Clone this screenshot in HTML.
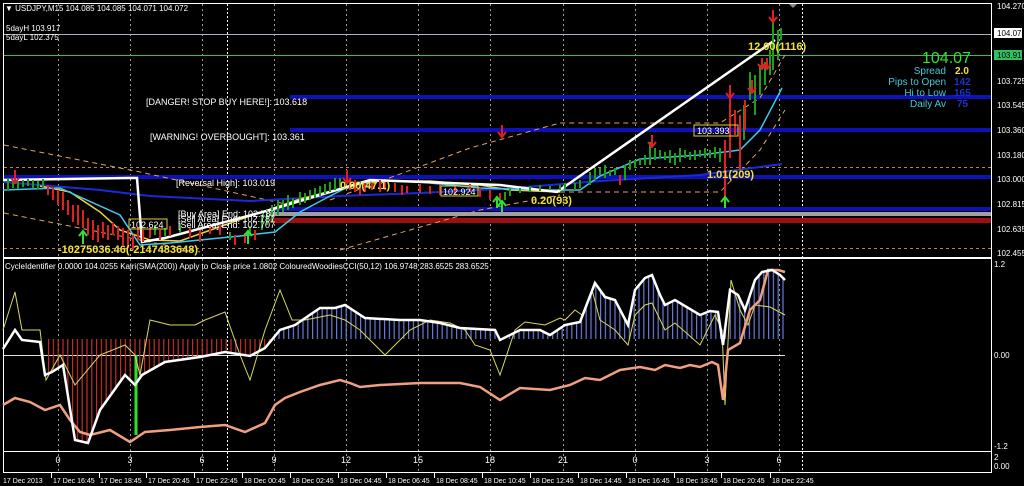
<!DOCTYPE html>
<html><head><meta charset="utf-8"><style>
html,body{margin:0;padding:0;background:#000;width:1024px;height:486px;overflow:hidden}
svg{display:block}
text{font-family:"Liberation Sans",sans-serif}
</style></head><body>
<svg width="1024" height="486" viewBox="0 0 1024 486" xmlns="http://www.w3.org/2000/svg">
<rect width="1024" height="486" fill="#000"/>
<defs>
<pattern id="stR" width="4.8" height="10" patternUnits="userSpaceOnUse"><rect x="0" y="0" width="1.2" height="10" fill="#c0302a"/></pattern>
<pattern id="stB" width="4.8" height="10" patternUnits="userSpaceOnUse"><rect x="0" y="0" width="1.2" height="10" fill="#6a78d8"/></pattern>
<clipPath id="cr"><rect x="45" y="258" width="225" height="200"/></clipPath>
<clipPath id="cb"><rect x="270" y="258" width="520" height="200"/></clipPath>
</defs>
<!-- frames -->
<rect x="3.5" y="3.5" width="988" height="254" fill="none" stroke="#fff"/>
<rect x="3.5" y="258.5" width="988" height="193" fill="none" stroke="#fff"/>
<rect x="3.5" y="451.5" width="988" height="21" fill="none" stroke="#fff"/>
<!-- vertical grid -->
<g stroke="#9a9a9a" stroke-dasharray="2,3" stroke-width="1">
<path d="M58.5 4V472M130.5 4V472M202.5 4V472M274.5 4V472M346.5 4V472M418.5 4V472M490.5 4V472M563.5 4V472M635.5 4V472M707.5 4V472M779.5 4V472"/>
</g>
<g stroke="#fff" stroke-dasharray="2,2"><path d="M227.5 4V472M802.5 4V472"/></g>
<!-- horizontal levels -->
<line x1="4" y1="34.5" x2="991" y2="34.5" stroke="#b0b0c0"/>
<line x1="4" y1="55.5" x2="991" y2="55.5" stroke="#3cc03c"/>
<g stroke="#1010b8" stroke-width="4">
<line x1="290" y1="97" x2="991" y2="97"/>
<line x1="290" y1="130" x2="991" y2="130"/>
<line x1="4" y1="177" x2="991" y2="177"/>
<line x1="270" y1="209" x2="991" y2="209"/>
</g>
<rect x="270" y="212" width="721" height="4" fill="#a0a0a0"/>
<rect x="270" y="218" width="721" height="5" fill="#9a1010"/>
<g stroke="#c08040" stroke-dasharray="3,3"><line x1="4" y1="167.5" x2="991" y2="167.5"/><line x1="4" y1="248.5" x2="991" y2="248.5"/></g>
<!-- orange channels -->
<g fill="none" stroke="#e0a060" stroke-dasharray="5,4" stroke-width="1">
<path d="M4 145L140 172L290 205"/>
<path d="M4 213L140 240L200 252"/>
<path d="M330 200L470 148L560 123L720 123L760 98L785 55"/>
<path d="M340 250L480 210L560 195"/>
<path d="M560 192L720 192L760 150L785 110"/>
</g>
<!-- MAs -->
<polyline fill="none" stroke="#1a2ad8" stroke-width="2" points="3,182 100,190 150,196 250,201 340,196 420,193 500,189 600,181 700,175 782,164"/>
<polyline fill="none" stroke="#f0d040" stroke-width="1.5" points="40,186 70,192 100,212 120,230 150,240 180,241 250,216 300,199 370,181 430,181 480,185 510,190 560,192"/>
<polyline fill="none" stroke="#40c8f0" stroke-width="1.5" points="3,190 60,188 120,215 140,245 170,243 240,236 275,232 300,212 330,196 350,186 380,181 420,182 480,188 540,190 580,190 600,176 640,159 700,155 740,150 760,130 782,88"/>
<polyline fill="none" stroke="#fff" stroke-width="2.5" points="3,180 130,178 137,178 142,242 165,238 270,210 310,198 370,180 500,185 557,192 775,40"/>
<!-- candles -->
<g fill="none" stroke-width="2">
<path stroke="#18a018" d="M8 178V190M13 180V188M18 181V189M23 180V187M28 179V186M33 180V188M38 181V189M43 179V187M155 225V235M165 228V236M180 224V233M230 232V240M250 226V236M262 215V230M267 210V225M272 205V222M278 200V215M283 200V212M288 195V210M293 198V208M300 192V205M305 193V203M310 190V200M315 188V198M320 186V196M325 184V194M330 182V192M335 178V190M340 178V188M505 192V200M510 188V196M520 188V193M530 186V192M540 185V191M550 186V190M560 185V190M565 183V189M575 183V190M580 180V188M590 172V185M595 168V180M600 168V175M605 165V178M610 170V176M615 168V175M625 165V180M630 160V170M635 160V168M640 158V165M645 155V165M650 142V165M655 148V160M660 150V158M665 152V160M670 150V163M675 153V165M680 148V162M685 150V158M690 152V160M695 150V160M700 150V157M705 148V158M710 150V158M715 147V158M720 148V162M744 105V140M750 72V100M755 75V115M760 65V95M765 62V85M770 50V75M773 18V70M778 30V60M781 28V40"/>
<path stroke="#e02020" d="M48 185V195M53 187V200M58 190V205M63 192V210M68 200V215M73 205V222M78 205V225M83 210V228M88 218V235M93 220V240M98 225V242M103 222V238M108 225V240M113 223V235M118 226V240M123 228V245M128 230V248M133 235V250M138 228V240M143 230V242M150 228V238M160 230V240M170 226V236M190 228V238M200 230V242M210 226V234M220 225V235M235 235V245M245 233V243M255 230V240M350 178V190M355 180V192M360 182V195M365 183V192M372 182V190M380 180V192M385 182V190M395 183V192M402 185V195M407 186V193M420 184V193M430 186V194M440 185V195M455 186V194M470 184V192M480 188V197M490 190V200M500 193V200M620 175V185M725 140V205M730 90V158M735 110V135M740 115V170M745 100V130"/>
</g>
<!-- arrows -->
<g fill="none" stroke-width="2">
<path stroke="#e02020" d="M15 170V182M11 178L15 183L19 178M347 170V182M343 178L347 183L351 178M502 125V136M498 132L502 137L506 132M652 135V146M648 142L652 147L656 142M730 85V97M726 93L730 98L734 93M752 80V92M748 88L752 93L756 88M762 58V68M758 64L762 69L766 64M767 58V68M763 64L767 69L771 64M773 10V21M769 17L773 22L777 17"/>
<path stroke="#30e030" d="M83 244V232M79 236L83 231L87 236M248 244V232M244 236L248 231L252 236M497 208V198M493 202L497 197L501 202M502 212V202M498 206L502 201L506 206M725 208V198M721 202L725 197L729 202"/>
</g>
<!-- box labels -->
<g font-size="9">
<rect x="129" y="219" width="38" height="10" fill="none" stroke="#e0d040"/><text x="131" y="228" fill="#fff">102.624</text>
<rect x="441" y="186" width="37" height="10" fill="none" stroke="#e0d040"/><text x="443" y="195" fill="#fff">102.924</text>
<rect x="694" y="125" width="44" height="11" fill="none" stroke="#e0d040"/><text x="697" y="134" fill="#fff">103.393</text>
</g>
<!-- text labels -->
<g font-size="9" fill="#fff">
<text x="146" y="105">[DANGER! STOP BUY HERE!]: 103.618</text>
<text x="150" y="140">[WARNING! OVERBOUGHT]: 103.361</text>
<text x="176" y="186">[Reversal High]: 103.019</text>
<text x="178" y="217">[Buy Area] End: 102.787</text>
<text x="178" y="222">[Sell Area] End: 102.787</text>
<text x="178" y="228">[Sell Area] End: 102.707</text>
</g>
<g font-size="11" font-weight="bold" fill="#f0e040">
<text x="58" y="253">-10275036.46(-2147483648)</text>
<text x="340" y="189">0.00(47.1)</text>
<text x="531" y="204">0.20(93)</text>
<text x="707" y="178">1.01(209)</text>
<text x="748" y="50">12.00(1116)</text>
</g>
<!-- header -->
<g font-size="8" fill="#fff">
<text x="5" y="11">▼ USDJPY,M15  104.085 104.085 104.071 104.072</text>
<text x="6" y="31">5dayH 103.917</text>
<text x="6" y="40">5dayL 102.375</text>
<text x="5" y="269">CycleIdentifier 0.0000 104.0255  Kairi(SMA(200)) Apply to Close price 1.0802  ColouredWoodiesCCI(50,12) 106.9748 283.6525 283.6525</text>
</g>
<!-- info panel -->
<text x="922" y="63" font-size="16" fill="#30e030">104.07</text>
<g font-size="10" text-anchor="end">
<text x="946" y="74" fill="#40c8d8">Spread</text><text x="946" y="85" fill="#40c8d8">Pips to Open</text><text x="946" y="96" fill="#40c8d8">Hi to Low</text><text x="946" y="107" fill="#40c8d8">Daily Av</text>
</g>
<g font-size="10" font-weight="bold"><text x="955" y="74" fill="#f0e040">2.0</text><text x="954" y="85" fill="#2030d0">142</text><text x="954" y="96" fill="#2030d0">165</text><text x="957" y="107" fill="#2030d0">75</text></g>
<!-- right axis -->
<g font-size="8" fill="#fff">
<text x="997" y="9">104.270</text>
<rect x="994" y="28" width="28" height="10" fill="#fff"/><text x="997" y="36" fill="#000">104.072</text>
<rect x="994" y="50" width="28" height="10" fill="#30c060"/><text x="997" y="58" fill="#000">103.917</text>
<text x="997" y="84">103.725</text><text x="997" y="108">103.545</text><text x="997" y="133">103.360</text>
<text x="997" y="158">103.180</text><text x="997" y="182">103.000</text><text x="997" y="207">102.815</text>
<text x="997" y="232">102.635</text><text x="997" y="256">102.455</text>
<text x="994" y="267">1.2</text><text x="994" y="358">0.00</text><text x="994" y="449">-1.2</text>
<text x="994" y="460">2</text><text x="994" y="469">0.00</text>
</g>
<!-- subwindow -->
<line x1="4" y1="355.5" x2="785" y2="355.5" stroke="#e0e0e0"/>
<polygon clip-path="url(#cr)" fill="url(#stR)" points="3,339 3,349 15,330 22,340 40,342 45,375 52,372 63,365 75,440 88,443 100,410 125,375 135,385 142,375 165,362 200,357 225,352 250,356 265,348 280,330 280,339"/>
<polygon clip-path="url(#cb)" fill="url(#stB)" points="265,339 265,348 280,330 295,325 320,308 335,308 345,305 365,318 400,320 420,320 440,323 460,328 495,330 500,340 520,330 540,330 550,335 565,325 580,322 595,283 605,297 615,300 628,325 635,290 645,278 652,275 660,295 665,305 675,300 700,315 710,311 718,312 723,345 730,290 738,295 745,310 755,280 762,272 772,270 780,275 785,280 785,339"/>
<path d="M136 355V435" stroke="#30e030" stroke-width="3"/>
<polyline fill="none" stroke="#d8d860" stroke-width="1" points="3,330 15,292 22,330 40,330 46,380 60,355 75,385 100,355 125,345 135,355 140,375 150,320 170,325 195,325 205,320 225,312 240,355 250,380 265,330 280,290 292,320 305,320 330,315 345,320 360,330 385,355 395,345 410,330 430,320 450,323 465,330 475,345 490,350 500,375 515,330 525,322 545,325 560,318 565,320 575,310 582,315 592,290 600,320 615,330 628,345 635,315 645,305 652,303 665,330 675,323 700,345 715,315 722,330 725,405 731,280 740,310 748,325 755,305 770,307 785,315"/>
<polyline fill="none" stroke="#f0a080" stroke-width="2.5" points="3,405 15,398 30,402 45,410 60,405 70,420 80,432 90,435 110,430 130,442 145,432 170,430 200,427 225,425 245,432 265,423 275,405 285,398 300,392 320,385 340,380 350,383 360,387 380,385 420,383 460,383 480,387 500,400 520,388 550,390 570,385 585,378 600,380 620,370 640,367 655,370 665,365 680,368 690,365 700,367 712,362 718,365 723,400 728,350 740,343 750,310 760,300 768,270 778,270 785,272"/>
<polyline fill="none" stroke="#fff" stroke-width="2.5" points="3,349 15,330 22,340 40,342 45,375 52,372 63,365 75,440 88,443 100,410 125,375 135,385 142,375 165,362 200,357 225,352 250,356 265,348 280,330 295,325 320,308 335,308 345,305 365,318 400,320 420,320 440,323 460,328 495,330 500,340 520,330 540,330 550,335 565,325 580,322 595,283 605,297 615,300 628,325 635,290 645,278 652,275 660,295 665,305 675,300 700,315 710,311 718,312 723,345 730,290 738,295 745,310 755,280 762,272 772,270 780,275 785,280"/>
<!-- time axis numbers -->
<g font-size="9" fill="#fff" text-anchor="middle">
<text x="58" y="463">0</text><text x="130" y="463">3</text><text x="202" y="463">6</text><text x="274" y="463">9</text><text x="346" y="463">12</text><text x="418" y="463">15</text><text x="490" y="463">18</text><text x="563" y="463">21</text><text x="635" y="463">0</text><text x="707" y="463">3</text><text x="779" y="463">6</text>
</g>
<g font-size="7" fill="#fff">
<text x="3" y="483">17 Dec 2013</text><text x="53" y="483">17 Dec 16:45</text><text x="100" y="483">17 Dec 18:45</text><text x="148" y="483">17 Dec 20:45</text><text x="196" y="483">17 Dec 22:45</text><text x="244" y="483">18 Dec 00:45</text><text x="292" y="483">18 Dec 02:45</text><text x="340" y="483">18 Dec 04:45</text><text x="388" y="483">18 Dec 06:45</text><text x="436" y="483">18 Dec 08:45</text><text x="484" y="483">18 Dec 10:45</text><text x="532" y="483">18 Dec 12:45</text><text x="580" y="483">18 Dec 14:45</text><text x="628" y="483">18 Dec 16:45</text><text x="676" y="483">18 Dec 18:45</text><text x="723" y="483">18 Dec 20:45</text><text x="772" y="483">18 Dec 22:45</text>
</g>
<g stroke="#fff"><path d="M51.5 473V478M99.5 473V478M146.5 473V478M194.5 473V478M242.5 473V478M290.5 473V478M338.5 473V478M386.5 473V478M434.5 473V478M482.5 473V478M530.5 473V478M578.5 473V478M626.5 473V478M674.5 473V478M721.5 473V478M770.5 473V478"/></g>
<path d="M789 4L797 4L793 8Z" fill="#888"/>
</svg>
</body></html>
